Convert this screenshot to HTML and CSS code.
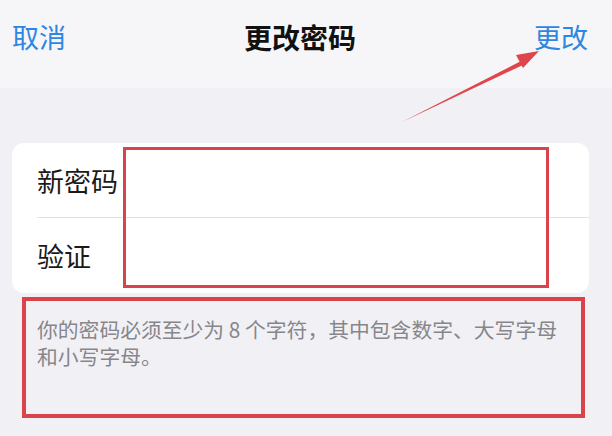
FILE: index.html
```html
<!DOCTYPE html>
<html lang="zh-CN">
<head>
<meta charset="utf-8">
<title>更改密码</title>
<link rel="stylesheet" href="styles.css">
</head>
<body>
<header class="nav">
  <span class="nav-btn cancel">取消</span>
  <h1 class="nav-title">更改密码</h1>
  <span class="nav-btn confirm">更改</span>
</header>
<main class="content">
  <section class="card">
    <div class="row row-first"><span class="label">新密码</span></div>
    <div class="row"><span class="label">验证</span></div>
  </section>
  <p class="footnote">你的密码必须至少为 8 个字符，其中包含数字、大写字母和小写字母。</p>
</main>
<div class="mark mark-fields"></div>
<div class="mark mark-note"></div>
<svg class="arrow" width="612" height="436" viewBox="0 0 612 436">
  <polygon points="402,122 522,60.5 524,64.5" fill="#e0454b"/>
  <polygon points="539,51 516,55 523,68" fill="#e0454b"/>
</svg>
</body>
</html>
```

FILE: styles.css
```css
html, body {
  margin: 0;
  padding: 0;
}
body {
  width: 612px;
  height: 436px;
  overflow: hidden;
  background: #f1f1f5;
  font-family: "Noto Sans CJK SC", "Noto Sans", sans-serif;
  position: relative;
}
.nav {
  height: 88px;
  box-sizing: border-box;
  background: #f6f6f8;
  display: grid;
  grid-template-columns: 1fr auto 1fr;
  align-items: start;
  padding: 19px 24px 0 12px;
}
.nav-btn {
  font-size: 27px;
  line-height: 36px;
  color: #2f86e0;
}
.cancel { justify-self: start; }
.confirm { justify-self: end; }
.nav-title {
  margin: 0;
  font-size: 28px;
  line-height: 36px;
  font-weight: 700;
  color: #111;
}
.content {
  padding: 55px 23px 0 12px;
}
.card {
  background: #fff;
  border-radius: 12px;
  padding-left: 25px;
}
.row {
  height: 75px;
  display: flex;
  align-items: center;
  box-sizing: border-box;
}
.row-first {
  border-bottom: 1px solid #e2e2e6;
}
.label {
  font-size: 27px;
  color: #1a1a1a;
}
.footnote {
  margin: 23px 0 0 25px;
  width: 540px;
  font-size: 20.8px;
  line-height: 27px;
  color: #86868b;
}
.mark {
  position: absolute;
  box-sizing: border-box;
  border: 3px solid #d9434b;
}
.mark-fields {
  left: 123px;
  top: 147px;
  width: 426px;
  height: 141px;
}
.mark-note {
  left: 22px;
  top: 297px;
  width: 563px;
  height: 121px;
  border-width: 4px;
}
.arrow {
  position: absolute;
  left: 0;
  top: 0;
}
```
